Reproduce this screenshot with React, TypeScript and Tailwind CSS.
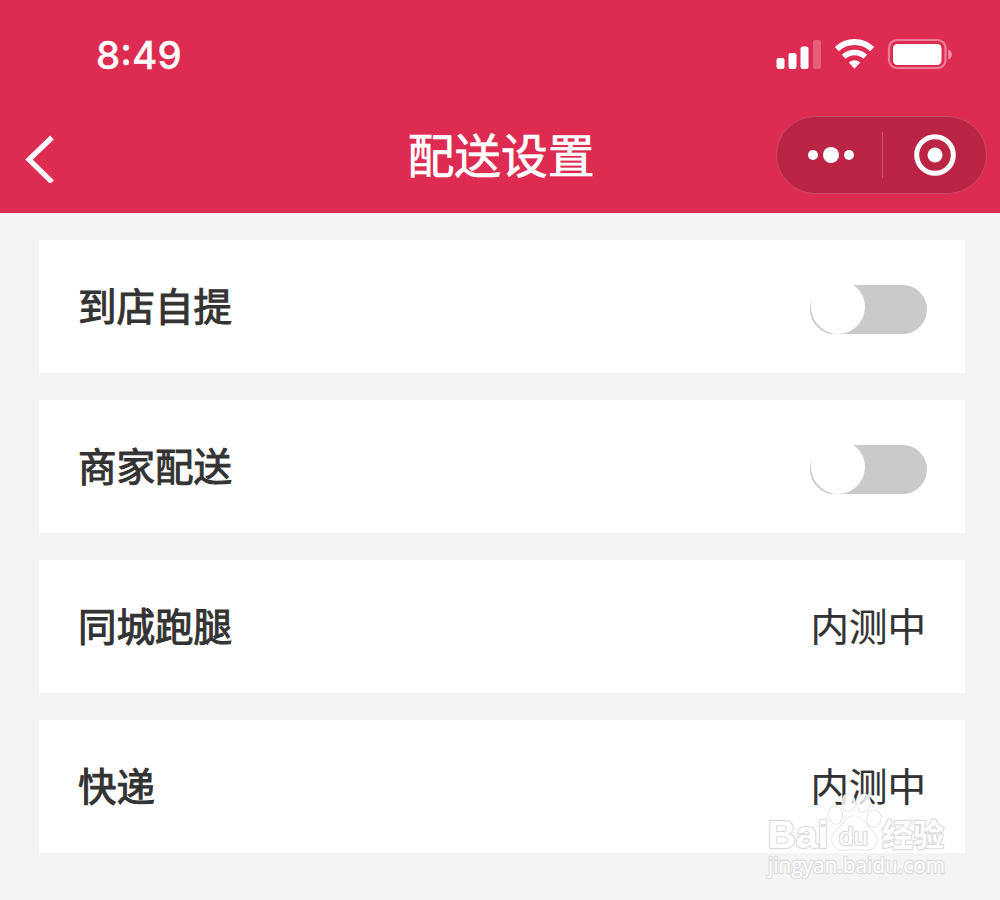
import { useState } from "react";

type DeliveryOption = {
  id: string;
  label: string;
  status?: string;
};

const options: DeliveryOption[] = [
  { id: "pickup", label: "到店自提" },
  { id: "merchant", label: "商家配送" },
  { id: "errand", label: "同城跑腿", status: "内测中" },
  { id: "express", label: "快递", status: "内测中" },
];

function StatusBar() {
  return (
    <div className="flex h-[104px] items-start justify-between pl-24 pr-12">
      <span className="mt-[31px] font-['Inter'] text-[38.5px] font-medium leading-[48px] tracking-[0.1px] [-webkit-text-stroke:0.3px_#fff] [font-feature-settings:'case']">
        8:49
      </span>
      <svg className="mt-9 h-9 w-[176px]" viewBox="776 36 176 36" fill="#fff">
        {/* signal */}
        <rect x="776.5" y="58" width="8" height="11" rx="2.2" />
        <rect x="788.5" y="53" width="8" height="16" rx="2.2" />
        <rect x="800.5" y="46.5" width="8" height="22.5" rx="2.2" />
        <rect x="813" y="40" width="8" height="29" rx="2.2" opacity="0.25" />
        {/* wifi */}
        <g fill="none" stroke="#fff">
          <path d="M836.8 49.2a25.5 25.5 0 0 1 35.4 0" strokeWidth="6" />
          <path d="M843.7 56.8a15.6 15.6 0 0 1 21.6 0" strokeWidth="5.4" />
        </g>
        <path d="M848.8 62.5a8.6 8.6 0 0 1 11.4 0l-5.7 6.2z" />
        {/* battery */}
        <rect x="889" y="40" width="56.5" height="28" rx="8" fill="none" stroke="#fff" strokeWidth="2.2" opacity="0.4" />
        <rect x="893" y="44" width="48.5" height="21" rx="4.5" />
        <path d="M948.3 49.5c4.6 1.6 4.6 8.4 0 10z" opacity="0.5" />
      </svg>
    </div>
  );
}

function NavBar() {
  return (
    <div className="grid h-[109px] grid-cols-[1fr_auto_1fr] items-start pl-6 pr-[13px]">
      <button aria-label="返回" className="mt-[31px] w-8">
        <svg className="h-12 w-8" viewBox="0 0 32 48" fill="none" stroke="#fff" strokeWidth="5.2">
          <path d="M28 2.5 5 24.5 28 47" />
        </svg>
      </button>
      <h1 className="mt-3.5 pr-[9px] text-[46.8px] leading-[70px] [-webkit-text-stroke:0.7px_#fff]">
        配送设置
      </h1>
      <div className="mt-3 flex h-[78px] w-[211px] items-center justify-self-end rounded-full border border-[#ca4b68] bg-[#bc2445]">
        <button aria-label="更多" className="flex w-[105px] items-center justify-center gap-[5px] pl-[3px]">
          <i className="size-[10px] rounded-full bg-white" />
          <i className="size-4 rounded-full bg-white" />
          <i className="size-[10px] rounded-full bg-white" />
        </button>
        <i className="h-[46px] w-px bg-[#cd5570]" />
        <button aria-label="关闭" className="flex flex-1 justify-center">
          <svg className="size-[42px]" viewBox="0 0 42 42">
            <circle cx="21" cy="21" r="18.3" fill="none" stroke="#fff" strokeWidth="5" />
            <circle cx="21" cy="21" r="7.5" fill="#fff" />
          </svg>
        </button>
      </div>
    </div>
  );
}

function Toggle({ label }: { label: string }) {
  const [on, setOn] = useState(false);
  return (
    <button
      role="switch"
      aria-checked={on}
      aria-label={label}
      onClick={() => setOn(!on)}
      className={`-mr-px mt-[5px] flex h-[49px] w-[117px] items-center rounded-full ${on ? "justify-end bg-[#de2b52]" : "bg-[#cacaca]"}`}
    >
      <span className="mb-1 ml-px size-[54px] shrink-0 rounded-full bg-white" />
    </button>
  );
}

function Watermark() {
  return (
    <svg
      className="pointer-events-none absolute left-[760px] top-[790px] h-[100px] w-[200px] [paint-order:stroke]"
      viewBox="760 790 200 100"
      fill="#fff"
      stroke="#dcdcdc"
      strokeWidth="2.4"
      strokeLinejoin="round"
    >
      <g fillOpacity="0.8" strokeWidth="1.2">
        <ellipse cx="835.5" cy="815" rx="7" ry="9" transform="rotate(-8 835.5 815)" />
        <ellipse cx="848.5" cy="802.5" rx="6.5" ry="9" />
        <ellipse cx="863.5" cy="803" rx="6.5" ry="9" transform="rotate(12 863.5 803)" />
        <ellipse cx="874" cy="818.5" rx="7" ry="8.5" transform="rotate(10 874 818.5)" />
        <path d="M854 816c-8 0-10 7-15 12-5 4-8 8-7 13 1 7 6 9 12 9 4 0 6-1 10-1s7 1 12 1c7 0 11-4 11-10 0-5-3-8-7-12-5-5-8-12-16-12z" />
      </g>
      <text x="767.5" y="848" textLength="61" lengthAdjust="spacingAndGlyphs" className="font-['Liberation_Sans'] text-[39px] font-bold">
        Bai
      </text>
      <text x="839" y="845" textLength="29" lengthAdjust="spacingAndGlyphs" className="font-['Liberation_Sans'] text-[23px]">
        du
      </text>
      <text x="882" y="846" textLength="62" lengthAdjust="spacingAndGlyphs" className="font-['Noto_Sans_CJK_SC'] text-[31px] font-bold">
        经验
      </text>
      <text x="768" y="872.5" textLength="177" lengthAdjust="spacingAndGlyphs" className="font-['Open_Sans'] text-[21px]">
        jingyan.baidu.com
      </text>
    </svg>
  );
}

export default function App() {
  return (
    <div className="relative h-[900px] w-[1000px] overflow-hidden bg-[#f4f4f4] font-['Noto_Sans_CJK_SC',sans-serif] text-[#333]">
      <header className="h-[213px] bg-[#de2b52] text-white">
        <StatusBar />
        <NavBar />
      </header>

      <main className="flex flex-col gap-[27px] pl-[39px] pr-[35px] pt-[27px]">
        {options.map((option) => (
          <div key={option.id} className="flex h-[133px] items-center justify-between bg-white px-[39px]">
            <span className="mb-1.5 text-[38.5px] leading-[58px] [-webkit-text-stroke:1px_#333]">{option.label}</span>
            {option.status ? (
              <span className="mb-1.5 text-[38.5px] leading-[58px] [-webkit-text-stroke:0.2px_#333]">{option.status}</span>
            ) : (
              <Toggle label={option.label} />
            )}
          </div>
        ))}
      </main>

      <Watermark />
    </div>
  );
}
